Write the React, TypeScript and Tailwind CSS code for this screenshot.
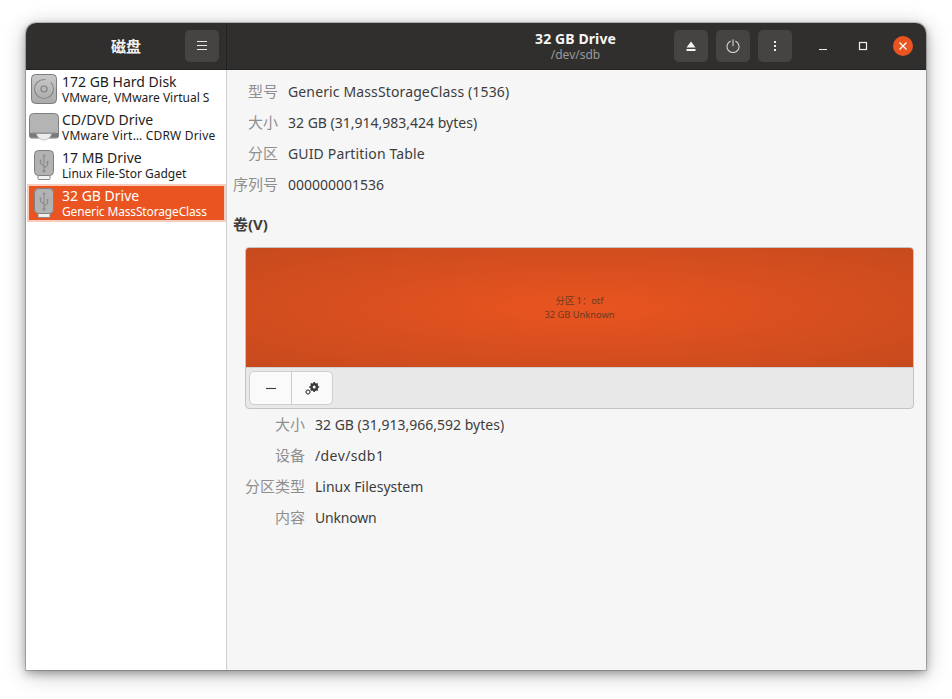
const FONT = 'font-["Noto_Sans","Noto_Sans_CJK_SC",sans-serif]';

function HardDiskIcon() {
  return (
    <svg width="26" height="30" viewBox="0 0 26 30">
      <defs>
        <linearGradient id="hd" x1="0" y1="0" x2="0" y2="1">
          <stop offset="0" stopColor="#c9c9c9" />
          <stop offset="1" stopColor="#a9a9a9" />
        </linearGradient>
      </defs>
      <rect x="0.5" y="0.5" width="25" height="29" rx="4" fill="url(#hd)" stroke="#7d7d7d" />
      <circle cx="13" cy="15" r="9.5" fill="none" stroke="#8a8a8a" strokeWidth="1.2" strokeDasharray="46 6" />
      <circle cx="13" cy="15" r="3" fill="none" stroke="#808080" strokeWidth="1.2" />
    </svg>
  );
}

function DiscIcon() {
  return (
    <svg width="30" height="28" viewBox="0 0 30 28">
      <path d="M4.500.5h21a4 4 0 0 1 4 4V23a2 2 0 0 1-2 2H2.500a2 2 0 0 1-2-2V4.500a4 4 0 0 1 4-4z" fill="#b4b4b4" stroke="#808080" />
      <path d="M1 20h28v3a1.500 1.500 0 0 1-1.500 1.500h-25A1.500 1.500 0 0 1 1 23z" fill="#7a7a7a" />
      <path d="M7 20.500h16c-1.500 4-4.500 6.500-8 6.500s-6.500-2.500-8-6.500z" fill="#ececec" stroke="#9a9a9a" strokeWidth="0.5" />
      <rect x="3" y="19.500" width="24" height="1.200" fill="#8d8d8d" />
    </svg>
  );
}

function UsbIcon() {
  return (
    <svg width="20" height="30" viewBox="0 0 20 30">
      <rect x="4" y="24" width="12" height="5.500" rx="1" fill="#f1f1f1" stroke="#8a8a8a" />
      <rect x="0.5" y="0.5" width="19" height="25" rx="4" fill="#b2b2b2" stroke="#808080" />
      <g fill="none" stroke="#8c8c8c" strokeWidth="1.100">
        <path d="M10 6v15" />
        <path d="M10 16l-3.500-2.500V11" />
        <path d="M10 18l3.500-2.500V13" />
      </g>
      <path d="M10 4l1.700 2.500H8.300z" fill="#8c8c8c" />
      <circle cx="10" cy="21" r="1.500" fill="#8c8c8c" />
      <circle cx="6.500" cy="10.500" r="1" fill="#8c8c8c" />
      <rect x="12.500" y="11" width="2" height="2" fill="#8c8c8c" />
    </svg>
  );
}

function EjectIcon() {
  return (
    <svg width="12" height="12" viewBox="0 0 12 12" fill="#f5f5f5">
      <path d="M6 1.500L10.500 7.500H1.500z" />
      <rect x="1.500" y="9" width="9" height="2" />
    </svg>
  );
}

function PowerIcon() {
  return (
    <svg width="14" height="14" viewBox="0 0 14 14" fill="none" stroke="#d4d4d4" strokeWidth="1.100" strokeLinecap="round">
      <path d="M7 .8v6" />
      <path d="M4.300 2.200a6 6 0 1 0 5.400 0" />
    </svg>
  );
}

// large gear top right, small one bottom left, both with a narrow hole
function GearsIcon() {
  return (
    <svg width="16" height="16" viewBox="0 0 16 16">
      <g stroke="#3a3a3a" fill="none">
        <circle cx="10.200" cy="7" r="2.700" strokeWidth="2.400" />
        <path d="M10.200 2v2M10.200 10v2M5.200 7h2M13.200 7h2M6.700 3.500l1.400 1.400M12.300 9.100l1.400 1.400M6.700 10.500l1.400-1.400M12.300 4.900l1.400-1.400" strokeWidth="1.700" />
      </g>
      <g stroke="#5a5a5a" fill="none">
        <circle cx="4" cy="12" r="1.800" strokeWidth="1.100" />
        <path d="M4 9v1M4 14v1M1 12h1M6 12h1M1.900 9.900l.7.7M5.400 13.400l.7.7M1.900 14.100l.7-.7M5.400 10.600l.7-.7" strokeWidth="1" />
      </g>
    </svg>
  );
}

function HeaderButton({ children }: { children: React.ReactNode }) {
  return (
    <button className="w-[34px] h-[32px] rounded-[5px] bg-[#454443] flex items-center justify-center">
      {children}
    </button>
  );
}

function DriveRow({
  icon,
  name,
  sub,
  selected,
  subClass,
}: {
  icon: React.ReactNode;
  name: string;
  sub: string;
  selected?: boolean;
  subClass?: string;
}) {
  return (
    <div
      className={
        selected
          ? 'h-[38px] flex items-center bg-[#e95420] border-2 border-[#f8cdbd] text-white'
          : 'h-[38px] flex items-center text-[#1d1d1d]'
      }
    >
      <div className={selected ? 'w-[33px] shrink-0 flex justify-start pl-[5px]' : 'w-[34px] mr-[1px] shrink-0 flex justify-center'}>{icon}</div>
      <div className="min-w-0 whitespace-nowrap">
        <div className="text-[14px] leading-[17px]">{name}</div>
        <div className={`text-[12px] leading-[15px] ${subClass ?? ''}`}>{sub}</div>
      </div>
    </div>
  );
}

function InfoRow({
  label,
  value,
  labelWidth,
  valueClass,
}: {
  label: string;
  value: string;
  labelWidth: string;
  valueClass?: string;
}) {
  return (
    <div className="h-[31px] flex items-center whitespace-nowrap">
      <div className={`${labelWidth} text-right text-[15px] text-[#8f8f8f]`}>{label}</div>
      <div className={`ml-[10px] text-[14px] text-[#3d3d3d] ${valueClass ?? ''}`}>{value}</div>
    </div>
  );
}

export default function App() {
  return (
    <div className={`${FONT} w-[952px] h-[699px] bg-white overflow-hidden pt-[23px] pl-[26px]`}>
      <div className="w-[900px] h-[647px] flex flex-col rounded-t-[10px] bg-[#f6f6f6] shadow-[0_0_0_1px_rgba(0,0,0,0.18),0_3px_8px_rgba(0,0,0,0.3),0_4px_22px_rgba(0,0,0,0.28)] overflow-hidden">
        <header className="h-[47px] shrink-0 flex bg-[#302f2e] border-b border-[#232323]">
          <div className="w-[200px] shrink-0 grid grid-cols-[1fr_auto_1fr] items-center">
            <div />
            <span className="text-[15px] font-bold text-[#f2f2f2]">磁盘</span>
            <div className="flex justify-end pr-[7px]">
              <HeaderButton>
                <svg width="12" height="10" viewBox="0 0 12 10" stroke="#e8e8e8" strokeWidth="1">
                  <path d="M1 .500h10M1 4.500h10M1 8.500h10" />
                </svg>
              </HeaderButton>
            </div>
          </div>
          <div className="w-px bg-[#232323]" />
          <div className="flex-1 grid grid-cols-[1fr_auto_1fr] items-center">
            <div />
            <div className="text-center mr-[2px]">
              <div className="text-[14px] leading-[17px] font-bold tracking-[0.1px] text-[#f5f5f5]">32 GB Drive</div>
              <div className="text-[12px] leading-[15px] text-[#9a9a9a]">/dev/sdb</div>
            </div>
            <div className="flex items-center justify-end">
              <div className="flex gap-[8px]">
                <HeaderButton><EjectIcon /></HeaderButton>
                <HeaderButton><PowerIcon /></HeaderButton>
                <HeaderButton>
                  <svg width="4" height="12" viewBox="0 0 4 12" fill="#f0f0f0">
                    <rect x="1" y="1" width="2" height="2" />
                    <rect x="1" y="5" width="2" height="2" />
                    <rect x="1" y="9" width="2" height="2" />
                  </svg>
                </HeaderButton>
              </div>
              <div className="w-[134px] flex items-center justify-end">
                <div className="w-[46px] flex justify-center">
                  <svg width="10" height="10" viewBox="0 0 10 10" stroke="#f0f0f0" strokeWidth="1.200"><path d="M1 8.500h8" /></svg>
                </div>
                <div className="w-[34px] flex justify-center">
                  <svg width="10" height="10" viewBox="0 0 10 10" fill="none" stroke="#f0f0f0" strokeWidth="1.200"><rect x="1.500" y="1.500" width="7" height="7" /></svg>
                </div>
                <div className="w-[46px] flex justify-center">
                  <div className="w-[20px] h-[20px] rounded-full bg-[#e95420] flex items-center justify-center">
                    <svg width="10" height="10" viewBox="0 0 10 10" stroke="#fff" strokeWidth="1.300"><path d="M1.500 1.500l7 7M8.500 1.500l-7 7" /></svg>
                  </div>
                </div>
              </div>
            </div>
          </div>
        </header>

        <div className="flex-1 flex min-h-0">
          <aside className="w-[200px] shrink-0 bg-white pl-[1px]">
            <DriveRow icon={<HardDiskIcon />} name="172 GB Hard Disk" sub="VMware, VMware Virtual S" />
            <DriveRow icon={<DiscIcon />} name="CD/DVD Drive" sub="VMware Virt… CDRW Drive" subClass="tracking-[0.2px]" />
            <DriveRow icon={<UsbIcon />} name="17 MB Drive" sub="Linux File-Stor Gadget" />
            <DriveRow icon={<UsbIcon />} name="32 GB Drive" sub="Generic MassStorageClass" subClass="tracking-[-0.15px]" selected />
          </aside>
          <div className="w-px bg-[#cfcfcf]" />
          <main className="flex-1 pt-[6px]">
            <InfoRow labelWidth="w-[51px]" label="型号" value="Generic MassStorageClass (1536)" valueClass="tracking-[0.13px]" />
            <InfoRow labelWidth="w-[51px]" label="大小" value="32 GB (31,914,983,424 bytes)" />
            <InfoRow labelWidth="w-[51px]" label="分区" value="GUID Partition Table" valueClass="tracking-[0.15px]" />
            <InfoRow labelWidth="w-[51px]" label="序列号" value="000000001536" />
            <div className="mt-[14px] ml-[6px] text-[15px] font-bold leading-[20px] text-[#3d3d3d]">卷(V)</div>
            <div className="mt-[13px] ml-[18px] w-[669px] h-[162px] rounded-[4px] border border-[#c4c4c4] overflow-hidden bg-[#e8e8e8]">
              <div className="h-[119px] flex flex-col items-center justify-center bg-[radial-gradient(ellipse_at_center,#e95420_0%,#c64a1e_100%)] text-[#6b3a22] text-[9.300px] leading-[14px]">
                <div>分区 1：otf</div>
                <div>32 GB Unknown</div>
              </div>
              <div className="h-[42px] border-t border-[#d0d0d0] px-[3px] pt-[3px]">
                <div className="w-[84px] h-[34px] flex rounded-[5px] border border-[#cdcdcd] bg-[#fafafa]">
                  <div className="w-[42px] border-r border-[#cdcdcd] flex items-center justify-center">
                    <svg width="10" height="10" viewBox="0 0 10 10" stroke="#3d3d3d" strokeWidth="1.100"><path d="M0 5.500h10" /></svg>
                  </div>
                  <div className="flex-1 flex items-center justify-center"><GearsIcon /></div>
                </div>
              </div>
            </div>
            <InfoRow labelWidth="w-[78px]" label="大小" value="32 GB (31,913,966,592 bytes)" />
            <InfoRow labelWidth="w-[78px]" label="设备" value="/dev/sdb1" valueClass="tracking-[0.4px]" />
            <InfoRow labelWidth="w-[78px]" label="分区类型" value="Linux Filesystem" />
            <InfoRow labelWidth="w-[78px]" label="内容" value="Unknown" valueClass="tracking-[-0.2px]" />
          </main>
        </div>
      </div>
    </div>
  );
}
